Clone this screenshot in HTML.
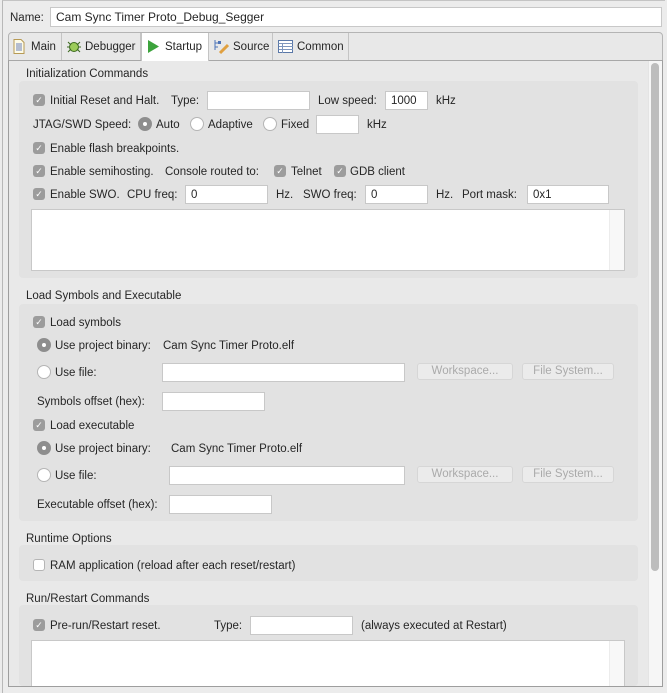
<!DOCTYPE html>
<html><head><meta charset="utf-8"><style>
*{box-sizing:border-box;margin:0;padding:0}
body{width:667px;height:693px;background:#ececec;font-family:"Liberation Sans",sans-serif;font-size:11.5px;color:#262626;position:relative;overflow:hidden}
.a{position:absolute;white-space:nowrap}
.t{position:absolute;white-space:nowrap;line-height:14px;margin-top:1px}
.in{position:absolute;background:#fff;border:1px solid #c8c8c8;height:19px;padding:3px 5px;line-height:13px}
.grp{position:absolute;left:19px;width:619px;background:#e2e2e2;border-radius:4px}
.cb{position:absolute;width:12px;height:12px;border-radius:3px;background:#9c9c9c;color:#fff;font-size:9px;line-height:12px;text-align:center}
.cb.u{background:#fff;border:1px solid #b5b5b5}
.rb{position:absolute;width:14px;height:14px;border-radius:50%;background:#fff;border:1px solid #b5b5b5}
.rb.on{background:#8e8e8e;border-color:#8e8e8e}
.rb.on::after{content:"";position:absolute;left:4px;top:4px;width:4px;height:4px;border-radius:50%;background:#fff}
.btn{position:absolute;height:17px;background:#ebebeb;border:1px solid #d6d6d6;border-radius:3px;color:#aaa;text-align:center;line-height:15px}
.ta{position:absolute;left:31px;width:594px;background:#fff;border:1px solid #c8c8c8}
.ta::after{content:"";position:absolute;right:0;top:0;bottom:0;width:14px;background:#f8f8f8;border-left:1px solid #ececec}
.tab{position:absolute;top:33px;height:27px;border-right:1px solid #c4c4c4;line-height:29px}
</style></head><body>
<div class="a" style="left:2px;top:0;width:663px;height:693px;border-left:1px solid #b8b8b8;border-top:1px solid #c4c4c4"></div>
<div class="t" style="left:10px;top:10px">Name:</div>
<div class="in" style="left:50px;top:7px;width:612px;height:20px;font-size:12px">Cam Sync Timer Proto_Debug_Segger</div>
<div class="a" style="left:8px;top:32px;width:655px;height:29px;background:#e8e8e8;border:1px solid #b4b4b4;border-radius:4px 4px 0 0"></div>
<div class="a" style="left:8px;top:60px;width:655px;height:627px;border:1px solid #9e9e9e;border-top:1px solid #a8a8a8;background:#e9e9e9"></div>
<div class="tab" style="left:9px;width:53px"><svg class="a" style="left:4px;top:6px" width="12" height="15"><path d="M1 .5h7l3 3v11H1z" fill="#fdfbe8" stroke="#b79a55"/><path d="M3 5h6M3 7h6M3 9h6M3 11h6" stroke="#6b7fb8"/></svg><span class="a" style="left:22px">Main</span></div>
<div class="tab" style="left:62px;width:79px"><svg class="a" style="left:4px;top:6px" width="15" height="15"><circle cx="8" cy="8" r="4.5" fill="#9ccc5a" stroke="#3d6a1f"/><path d="M2 3l3 3M14 3l-3 3M1 8h3M12 8h3M2 13l3-3M14 13l-3-3" stroke="#3d6a1f"/></svg><span class="a" style="left:23px">Debugger</span></div>
<div class="tab" style="left:141px;width:68px;background:#fff;height:28px;border-left:1px solid #c4c4c4"><svg class="a" style="left:5px;top:7px" width="13" height="13"><path d="M1 0L12 6.5 1 13z" fill="#3ca33c"/></svg><span class="a" style="left:23px">Startup</span></div>
<div class="tab" style="left:209px;width:64px"><svg class="a" style="left:4px;top:6px" width="16" height="16"><path d="M2 1v10M2 4h4M2 8h3" stroke="#4c73b8"/><rect x="5" y="2" width="3" height="3" fill="#4c73b8"/><path d="M7 14l8-8" stroke="#e0a040" stroke-width="3"/></svg><span class="a" style="left:24px">Source</span></div>
<div class="tab" style="left:273px;width:76px"><svg class="a" style="left:5px;top:7px" width="15" height="13"><rect x=".5" y=".5" width="14" height="12" fill="#fff" stroke="#5a78a8"/><path d="M.5 3.5h14M4.5 3v10M1 6.5h14M1 9.5h14" stroke="#7e96bd"/></svg><span class="a" style="left:24px">Common</span></div>
<div class="a" style="left:648px;top:61px;width:14px;height:625px;background:#f6f6f6;border-left:1px solid #e4e4e4"></div>
<div class="a" style="left:651px;top:63px;width:8px;height:508px;background:#bdbdbd;border-radius:4px"></div>

<div class="t" style="left:26px;top:66px">Initialization Commands</div>
<div class="grp" style="top:81px;height:197px"></div>
<div class="cb" style="left:33px;top:94px">✓</div><div class="t" style="left:50px;top:93px">Initial Reset and Halt.</div>
<div class="t" style="left:171px;top:93px">Type:</div><div class="in" style="left:207px;top:91px;width:103px"></div>
<div class="t" style="left:318px;top:93px">Low speed:</div><div class="in" style="left:385px;top:91px;width:43px">1000</div><div class="t" style="left:436px;top:93px">kHz</div>
<div class="t" style="left:33px;top:117px">JTAG/SWD Speed:</div>
<div class="rb on" style="left:138px;top:117px"></div><div class="t" style="left:156px;top:117px">Auto</div>
<div class="rb" style="left:190px;top:117px"></div><div class="t" style="left:208px;top:117px">Adaptive</div>
<div class="rb" style="left:263px;top:117px"></div><div class="t" style="left:281px;top:117px">Fixed</div>
<div class="in" style="left:316px;top:115px;width:43px"></div><div class="t" style="left:367px;top:117px">kHz</div>
<div class="cb" style="left:33px;top:142px">✓</div><div class="t" style="left:50px;top:141px">Enable flash breakpoints.</div>
<div class="cb" style="left:33px;top:165px">✓</div><div class="t" style="left:50px;top:164px">Enable semihosting.</div>
<div class="t" style="left:165px;top:164px">Console routed to:</div>
<div class="cb" style="left:274px;top:165px">✓</div><div class="t" style="left:291px;top:164px">Telnet</div>
<div class="cb" style="left:334px;top:165px">✓</div><div class="t" style="left:350px;top:164px">GDB client</div>
<div class="cb" style="left:33px;top:188px">✓</div><div class="t" style="left:50px;top:187px">Enable SWO.</div>
<div class="t" style="left:127px;top:187px">CPU freq:</div><div class="in" style="left:185px;top:185px;width:83px">0</div><div class="t" style="left:276px;top:187px">Hz.</div>
<div class="t" style="left:303px;top:187px">SWO freq:</div><div class="in" style="left:365px;top:185px;width:63px">0</div><div class="t" style="left:436px;top:187px">Hz.</div>
<div class="t" style="left:462px;top:187px">Port mask:</div><div class="in" style="left:527px;top:185px;width:82px">0x1</div>
<div class="ta" style="top:209px;height:62px"></div>

<div class="t" style="left:26px;top:288px">Load Symbols and Executable</div>
<div class="grp" style="top:304px;height:217px"></div>
<div class="cb" style="left:33px;top:316px">✓</div><div class="t" style="left:50px;top:315px">Load symbols</div>
<div class="rb on" style="left:37px;top:338px"></div><div class="t" style="left:55px;top:338px">Use project binary:</div><div class="t" style="left:163px;top:338px">Cam Sync Timer Proto.elf</div>
<div class="rb" style="left:37px;top:365px"></div><div class="t" style="left:55px;top:365px">Use file:</div>
<div class="in" style="left:162px;top:363px;width:243px"></div>
<div class="btn" style="left:417px;top:363px;width:96px">Workspace...</div><div class="btn" style="left:522px;top:363px;width:92px">File System...</div>
<div class="t" style="left:37px;top:394px">Symbols offset (hex):</div><div class="in" style="left:162px;top:392px;width:103px"></div>
<div class="cb" style="left:33px;top:419px">✓</div><div class="t" style="left:50px;top:418px">Load executable</div>
<div class="rb on" style="left:37px;top:441px"></div><div class="t" style="left:55px;top:441px">Use project binary:</div><div class="t" style="left:171px;top:441px">Cam Sync Timer Proto.elf</div>
<div class="rb" style="left:37px;top:468px"></div><div class="t" style="left:55px;top:468px">Use file:</div>
<div class="in" style="left:169px;top:466px;width:236px"></div>
<div class="btn" style="left:417px;top:466px;width:96px">Workspace...</div><div class="btn" style="left:522px;top:466px;width:92px">File System...</div>
<div class="t" style="left:37px;top:497px">Executable offset (hex):</div><div class="in" style="left:169px;top:495px;width:103px"></div>

<div class="t" style="left:26px;top:531px">Runtime Options</div>
<div class="grp" style="top:545px;height:36px"></div>
<div class="cb u" style="left:33px;top:559px"></div><div class="t" style="left:50px;top:558px">RAM application (reload after each reset/restart)</div>

<div class="t" style="left:26px;top:591px">Run/Restart Commands</div>
<div class="grp" style="top:605px;height:81px"></div>
<div class="cb" style="left:33px;top:619px">✓</div><div class="t" style="left:50px;top:618px">Pre-run/Restart reset.</div>
<div class="t" style="left:214px;top:618px">Type:</div><div class="in" style="left:250px;top:616px;width:103px"></div>
<div class="t" style="left:361px;top:618px">(always executed at Restart)</div>
<div class="ta" style="top:640px;height:46px;border-bottom:none"></div>
<div class="a" style="left:8px;top:686px;width:655px;height:1px;background:#9e9e9e"></div>
</body></html>
